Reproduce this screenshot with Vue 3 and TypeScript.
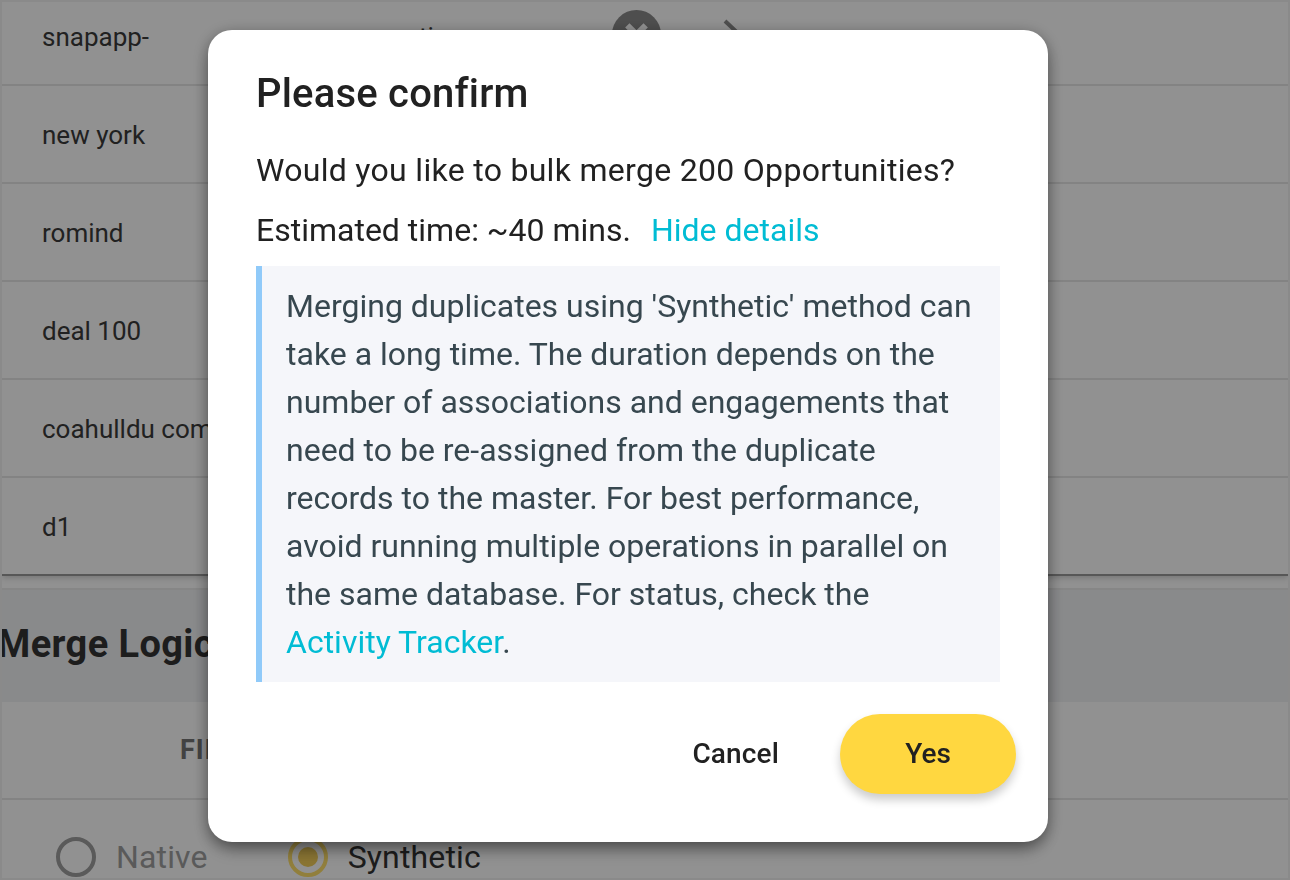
<script setup lang="ts">
const rows: string[] = ['snapapp-', 'new york', 'romind', 'deal 100', 'coahulldu company', 'd1']
</script>

<template>
  <div class="page">
    <div class="list">
      <div v-for="(r, i) in rows" :key="r" class="row">
        <span class="name">{{ r }}</span>
        <template v-if="i === 0">
          <span class="status">tion</span>
          <svg class="remove" width="49" height="49" viewBox="0 0 48 48">
            <circle cx="24" cy="24" r="24" fill="#8a8a8a" />
            <path d="M15 15 L33 33 M33 15 L15 33" stroke="#fff" stroke-width="6" />
          </svg>
          <svg class="chev" width="24" height="40" viewBox="0 0 24 40">
            <path d="M3 3 L21 20 L3 37" fill="none" stroke="#8a8a8a" stroke-width="4" />
          </svg>
        </template>
      </div>
    </div>
    <div class="logic-head"><h2>Merge Logic</h2></div>
    <div class="table-head"><span>FIELD</span></div>
    <div class="radios">
      <label class="radio"><span class="dot"></span><span class="off">Native</span></label>
      <label class="radio on"><span class="dot"><i></i></span><span>Synthetic</span></label>
    </div>

    <div class="overlay">
      <div class="dialog">
        <h1>Please confirm</h1>
        <p class="q">Would you like to bulk merge 200 Opportunities?</p>
        <p class="est">Estimated time: ~40 mins.<a class="link hide">Hide details</a></p>
        <div class="note">
          Merging duplicates using 'Synthetic' method can take a long time. The duration depends on the number of associations and engagements that need to be re-assigned from the duplicate records to the master. For best performance, avoid running multiple operations in parallel on the same database. For status, check the <a class="link">Activity Tracker</a>.
        </div>
        <div class="actions">
          <button class="cancel">Cancel</button>
          <button class="yes">Yes</button>
        </div>
      </div>
    </div>
  </div>
</template>

<style>
html, body { margin: 0; overflow: hidden; }
</style>

<style scoped>
.page {
  height: 880px;
  overflow: hidden;
  background: #fff;
  border: 2px solid #f3f3f3;
  font-family: Roboto, sans-serif;
  color: #212121;
  box-sizing: border-box;
  position: relative;
}
.list { margin-top: -14px; border-bottom: 2px solid #9a9a9a; box-shadow: 0 2px 6px rgba(0,0,0,.18); }
.row {
  height: 96px;
  border-bottom: 2px solid #e6e6e6;
  display: flex;
  align-items: center;
  padding-left: 40px;
  font-size: 26px;
  color: #3a3a3a;
  position: relative;
}
.row:last-child { border-bottom: 0; }
.name { white-space: nowrap; position: relative; top: 1px; }
.status { position: absolute; left: 417px; top: 34px; }
.remove { position: absolute; left: 610px; top: 22px; }
.chev { position: absolute; left: 720px; top: 30px; }
.logic-head {
  margin-top: 12px;
  height: 114px;
  box-sizing: border-box;
  border-top: 2px solid #ececec;
  background: #f1f2f5;
  display: flex;
  align-items: center;
  overflow: hidden;
}
.logic-head h2 { margin: 0 0 4px -5px; font-size: 38px; font-weight: 700; letter-spacing: .4px; color: #333; }
.table-head {
  height: 96px;
  border-bottom: 2px solid #e6e6e6;
  display: flex;
  align-items: center;
  padding-left: 178px;
  font-size: 27px;
  font-weight: 700;
  letter-spacing: 1px;
  color: #757575;
}
.radios { display: flex; gap: 80px; padding: 37px 0 0 54px; font-size: 32px; letter-spacing: .15px; color: #333; }
.radio { display: flex; align-items: center; gap: 20px; }
.off { color: #9e9e9e; }
.dot {
  width: 40px; height: 40px; box-sizing: border-box;
  border: 4px solid #9e9e9e; border-radius: 50%;
  display: flex; align-items: center; justify-content: center;
}
.on .dot { border-color: #ffdf6a; }
.dot i { width: 20px; height: 20px; border-radius: 50%; background: #f2cd5a; }

.overlay {
  position: fixed;
  inset: 0;
  background: rgba(0,0,0,.43);
  display: flex;
  justify-content: center;
  align-items: flex-start;
  padding: 30px 34px 0 0;
}
.dialog {
  width: 840px;
  height: 812px;
  box-sizing: border-box;
  background: #fff;
  border-radius: 24px;
  padding: 39px 32px 48px 48px;
  box-shadow: 0 4px 16px rgba(0,0,0,.4), 0 12px 20px -6px rgba(0,0,0,.25);
  display: flex;
  flex-direction: column;
}
h1 { margin: 0; font-size: 40px; line-height: 50px; font-weight: 500; letter-spacing: .2px; }
.q { margin: 29px 0 0; font-size: 32px; line-height: 44px; letter-spacing: .3px; }
.est { margin: 16px 0 0; font-size: 32px; line-height: 44px; }
.link { color: #00bcd4; }
.hide { margin-left: 20px; }
.note {
  margin-top: 14px;
  width: 744px;
  box-sizing: border-box;
  background: #f5f6fa;
  border-left: 6px solid #90caf9;
  padding: 16px 24px 16px 24px;
  font-size: 32px;
  line-height: 48px;
  color: #37474f;
}
.actions { margin-top: 32px; display: flex; align-items: center; justify-content: flex-end; gap: 61px; }
button { border: 0; background: none; font-family: inherit; font-size: 28px; font-weight: 500; color: #212121; padding: 0 0 2px; }
.cancel { letter-spacing: .15px; }
.yes {
  width: 176px; height: 80px; border-radius: 40px;
  background: #ffd740;
  box-shadow: 0 6px 10px rgba(0,0,0,.2);
}
</style>
